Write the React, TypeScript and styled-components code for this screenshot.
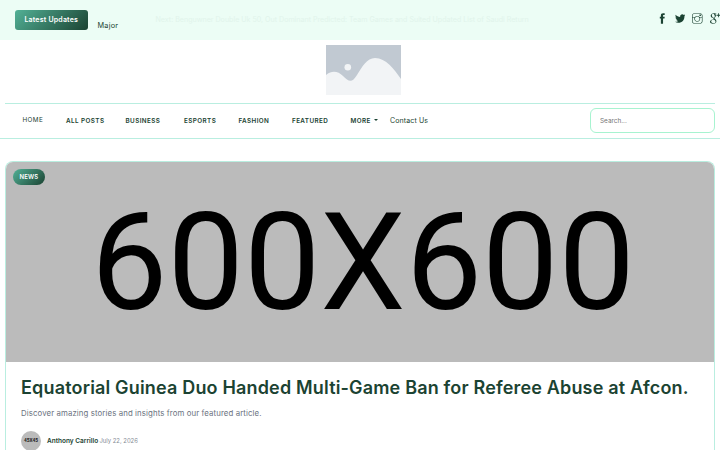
import React from "react";
import styled, { createGlobalStyle } from "styled-components";
import {
  TfiFacebook,
  TfiTwitterAlt,
  TfiInstagram,
  TfiGoogle,
} from "react-icons/tfi";

const palette = {
  dark: "#1b4332",
  mint: "#ecfdf5",
  border: "#a7f3d0",
  line: "#b9eee0",
  gray: "#6b7280",
};

const GlobalStyle = createGlobalStyle`
  * {
    box-sizing: border-box;
  }

  body {
    margin: 0;
    background-color: white;
    color: ${palette.dark};
    font-family: Inter, Roboto, sans-serif;
  }
`;

const Page = styled.div`
  display: flex;
  flex-direction: column;
  height: 450px;
  overflow: hidden;
`;

const TopBar = styled.div`
  display: flex;
  flex: none;
  height: 40px;
  padding-left: 15px;
  background-color: ${palette.mint};
  overflow: hidden;
`;

const LatestBadge = styled.div`
  flex: none;
  width: 72.5px;
  height: 19.5px;
  margin-top: 10px;
  border-radius: 3px;
  background: linear-gradient(135deg, #52b196, ${palette.dark});
  color: white;
  font-size: 7px;
  font-weight: 600;
  line-height: 20px;
  text-align: center;
  letter-spacing: 0.2px;
`;

const Ticker = styled.div`
  flex: none;
  width: 68px;
  padding: 20px 0 0 10px;
  font-size: 7.3px;
  line-height: 12px;
  letter-spacing: 0.25px;
`;

const FadedHeadline = styled.div`
  flex: none;
  width: 491.5px;
  padding-top: 14px;
  color: #e1f4eb;
  font-size: 7.1px;
  line-height: 12px;
  white-space: nowrap;
`;

const Socials = styled.div`
  display: flex;
  flex: none;
  gap: 7px;
  padding: 13px 0 0 10px;

  svg {
    flex: none;
    width: 10.5px;
    height: 11px;
  }
`;

const LogoRow = styled.div`
  display: flex;
  flex: none;
  justify-content: center;
  height: 63px;
  padding: 5px 0 0 6px;

  svg {
    display: block;
  }
`;

const NavBar = styled.nav`
  flex: none;
  height: 36px;
  border-bottom: 1px solid ${palette.line};
`;

const NavInner = styled.div`
  display: flex;
  height: 35px;
  margin: 0 5px;
  border-top: 1px solid ${palette.line};
  line-height: 34px;
`;

const NavItem = styled.a<{ $width: number; $active?: boolean }>`
  flex: none;
  width: ${({ $width }) => $width}px;
  margin-top: ${({ $active }) => ($active ? "-1px" : "0")};
  padding-left: ${({ $active }) => ($active ? "17.5px" : "0")};
  font-size: 6.3px;
  font-weight: ${({ $active }) => ($active ? 400 : 600)};
  letter-spacing: 0.43px;
  white-space: nowrap;
`;

const Caret = styled.span`
  display: inline-block;
  margin-left: 3.5px;
  vertical-align: 2px;
  border: 2.5px solid transparent;
  border-top-color: ${palette.dark};
  border-bottom: 0;
`;

const ContactLink = styled.a`
  font-size: 7px;
  letter-spacing: 0.13px;
`;

const SearchBox = styled.input`
  width: 125px;
  height: 25px;
  margin: 4px 0 0 auto;
  padding: 0 9px;
  border: 1px solid ${palette.border};
  border-radius: 6px;
  outline: 0;
  font-family: inherit;
  font-size: 6.4px;

  &::placeholder {
    color: #757575;
  }
`;

const Card = styled.article`
  flex: 1;
  min-height: 0;
  margin: 22px 5px 0;
  border: 1px solid ${palette.line};
  border-bottom: 0;
  border-radius: 8px 8px 0 0;
  overflow: hidden;
`;

const Hero = styled.div`
  position: relative;
  height: 200px;
  padding-top: 1px;
  background-color: #bbbbbb;
  color: black;
  font-family: Roboto, sans-serif;
  font-size: 136px;
  line-height: 200px;
  text-align: center;
  text-indent: 6px;
  white-space: nowrap;
  overflow: hidden;
`;

const Category = styled.span`
  position: absolute;
  top: 7px;
  left: 7px;
  width: 32px;
  height: 16px;
  border-radius: 8px;
  background: linear-gradient(135deg, #52b196, ${palette.dark});
  color: white;
  font-family: Inter, sans-serif;
  font-size: 6px;
  font-weight: 600;
  line-height: 16px;
  letter-spacing: 0.15px;
  text-indent: 0;
`;

const CardBody = styled.div`
  padding: 13px 15px 0;
`;

const Title = styled.h1`
  margin: 0;
  font-size: 18px;
  font-weight: 600;
  line-height: 26px;
  letter-spacing: 0.17px;
  white-space: nowrap;
`;

const Excerpt = styled.p`
  margin: 6px 0 0;
  color: ${palette.gray};
  font-size: 7.8px;
  line-height: 13px;
  letter-spacing: 0.11px;
`;

const Meta = styled.div`
  display: flex;
  align-items: center;
  margin-top: 10.5px;
  line-height: 20px;
`;

const Avatar = styled.div`
  width: 20px;
  height: 20px;
  margin-right: 6px;
  border-radius: 50%;
  background-color: #bbbbbb;
  color: #222222;
  font-family: Roboto, sans-serif;
  font-size: 4.8px;
  font-weight: 700;
  text-align: center;
`;

const Author = styled.span`
  width: 52.5px;
  font-size: 6.5px;
  font-weight: 600;
  white-space: nowrap;
`;

const PostDate = styled.span`
  color: #858b95;
  font-size: 5.9px;
`;

const navItems = [
  { label: "ALL POSTS", width: 59.5 },
  { label: "BUSINESS", width: 58.5 },
  { label: "ESPORTS", width: 54.5 },
  { label: "FASHION", width: 53.5 },
  { label: "FEATURED", width: 58.5 },
];

const LogoImage: React.FC = () => (
  <svg width="75" height="50" viewBox="0 0 75 50">
    <path fill="#c1c9d2" d="M0 0h75v50H0z" />
    <path
      fill="#f2f4f6"
      d="M0 30C6 25 12 26 17 31C23 37 26 38 31 30C36 22 41 13 49 13C60 13 68 24 75 34V50H0Z"
    />
    <circle cx="21.8" cy="22.3" r="3.3" fill="#f2f4f6" />
  </svg>
);

const App: React.FC = () => {
  return (
    <Page>
      <GlobalStyle />
      <TopBar>
        <LatestBadge>Latest Updates</LatestBadge>
        <Ticker>Major</Ticker>
        <FadedHeadline>
          Next: Benguwner Double Uk 50, Out Dominant Predicted: Team Games and
          Suited Updated List of Saudi Return
        </FadedHeadline>
        <Socials>
          <TfiFacebook />
          <TfiTwitterAlt />
          <TfiInstagram />
          <TfiGoogle />
        </Socials>
      </TopBar>
      <LogoRow>
        <LogoImage />
      </LogoRow>
      <NavBar>
        <NavInner>
          <NavItem $width={61} $active>
            HOME
          </NavItem>
          {navItems.map(({ label, width }) => (
            <NavItem key={label} $width={width}>
              {label}
            </NavItem>
          ))}
          <NavItem $width={39.5}>
            MORE
            <Caret />
          </NavItem>
          <ContactLink>Contact Us</ContactLink>
          <SearchBox placeholder="Search..." />
        </NavInner>
      </NavBar>
      <Card>
        <Hero>
          600X600
          <Category>NEWS</Category>
        </Hero>
        <CardBody>
          <Title>
            Equatorial Guinea Duo Handed Multi-Game Ban for Referee Abuse at
            Afcon.
          </Title>
          <Excerpt>
            Discover amazing stories and insights from our featured article.
          </Excerpt>
          <Meta>
            <Avatar>45X45</Avatar>
            <Author>Anthony Carrillo</Author>
            <PostDate>July 22, 2026</PostDate>
          </Meta>
        </CardBody>
      </Card>
    </Page>
  );
};

export default App;
